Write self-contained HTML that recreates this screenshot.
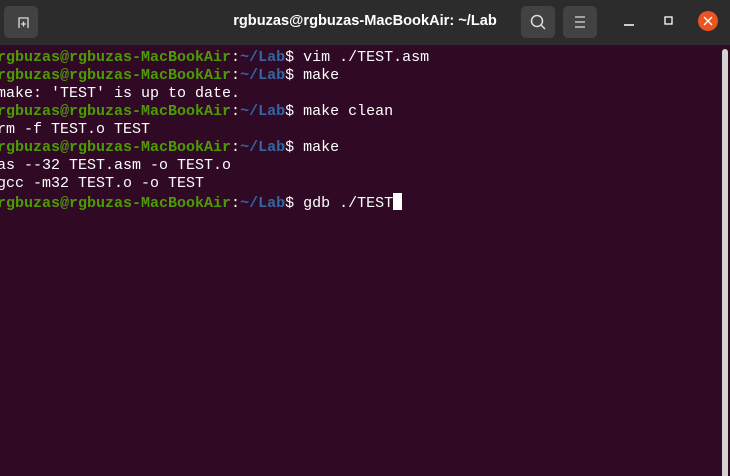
<!DOCTYPE html>
<html><head><style>
html,body{margin:0;padding:0;width:730px;height:476px;overflow:hidden;background:#300a24}
.hdr{position:absolute;left:0;top:0;width:730px;height:45px;background:#2c2c2c}
.btn{position:absolute;top:6px;width:34px;height:32px;background:#424242;border-radius:5px}
.title{position:absolute;left:0;width:730px;top:13px;text-align:center;color:#fff;font:bold 14.6px "Liberation Sans",sans-serif}
.term{position:absolute;left:-3px;top:49px;font:15px/18px "Liberation Mono",monospace;color:#ffffff;white-space:pre}
.g{color:#4e9a06;font-weight:bold}.b{color:#3465a4;font-weight:bold}
.cur{display:inline-block;width:9px;height:17px;background:#fff;vertical-align:-3px}
.sb{position:absolute;left:722px;top:49px;width:6px;height:427px;background:#d3d3d3;border-radius:3px 3px 0 0}
</style></head><body>
<div class="hdr">
<div class="btn" style="left:4px"><svg width="34" height="32"><path d="M15 22V12h9v10M17 18h5M19.5 15.5v5" stroke="#ddd" stroke-width="1.3" fill="none"/></svg></div>
<div class="title">rgbuzas@rgbuzas-MacBookAir: ~/Lab</div>
<div class="btn" style="left:521px"><svg width="34" height="32"><circle cx="16" cy="15" r="5.5" stroke="#ddd" stroke-width="1.5" fill="none"/><path d="M20 19l4 4" stroke="#ddd" stroke-width="1.5"/></svg></div>
<div class="btn" style="left:563px"><svg width="34" height="32"><path d="M12 11h10M12 16h10M12 21h10" stroke="#ddd" stroke-width="1.3"/></svg></div>
<svg style="position:absolute;left:610px;top:10px" width="120" height="25"><path d="M14 15h10" stroke="#fff" stroke-width="1.5"/><rect x="55" y="7" width="7" height="7" stroke="#fff" stroke-width="1.3" fill="none"/><circle cx="98" cy="11" r="10" fill="#e95420"/><path d="M94 7l8 8M102 7l-8 8" stroke="#fff" stroke-width="1.4"/></svg>
</div>
<div class="term"><span class="g">rgbuzas@rgbuzas-MacBookAir</span>:<span class="b">~/Lab</span>$ vim ./TEST.asm
<span class="g">rgbuzas@rgbuzas-MacBookAir</span>:<span class="b">~/Lab</span>$ make
make: 'TEST' is up to date.
<span class="g">rgbuzas@rgbuzas-MacBookAir</span>:<span class="b">~/Lab</span>$ make clean
rm -f TEST.o TEST
<span class="g">rgbuzas@rgbuzas-MacBookAir</span>:<span class="b">~/Lab</span>$ make
as --32 TEST.asm -o TEST.o
gcc -m32 TEST.o -o TEST
<span class="g">rgbuzas@rgbuzas-MacBookAir</span>:<span class="b">~/Lab</span>$ gdb ./TEST<span class="cur"></span></div>
<div class="sb"></div>
</body></html>
